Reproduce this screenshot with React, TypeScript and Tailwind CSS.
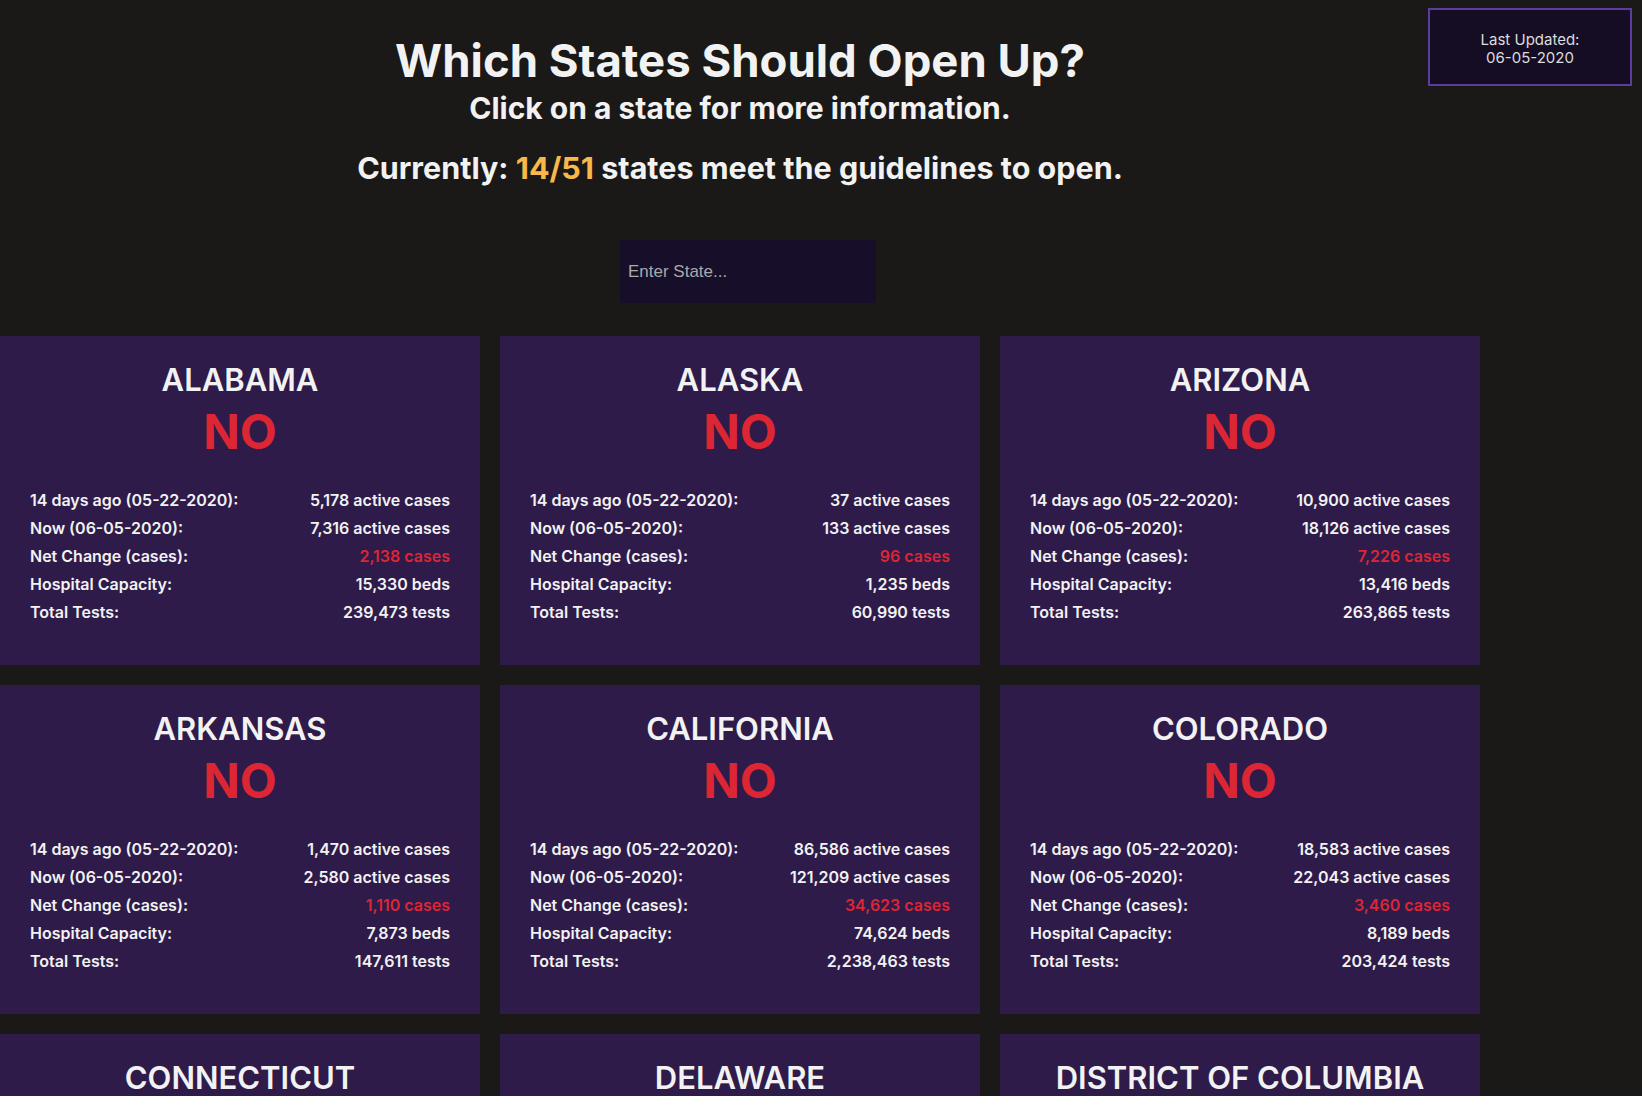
import { useState } from "react";

type StateInfo = {
  name: string;
  before: string;
  now: string;
  change: string;
  beds: string;
  tests: string;
};

const states: StateInfo[] = [
  { name: "ALABAMA", before: "5,178", now: "7,316", change: "2,138", beds: "15,330", tests: "239,473" },
  { name: "ALASKA", before: "37", now: "133", change: "96", beds: "1,235", tests: "60,990" },
  { name: "ARIZONA", before: "10,900", now: "18,126", change: "7,226", beds: "13,416", tests: "263,865" },
  { name: "ARKANSAS", before: "1,470", now: "2,580", change: "1,110", beds: "7,873", tests: "147,611" },
  { name: "CALIFORNIA", before: "86,586", now: "121,209", change: "34,623", beds: "74,624", tests: "2,238,463" },
  { name: "COLORADO", before: "18,583", now: "22,043", change: "3,460", beds: "8,189", tests: "203,424" },
  { name: "CONNECTICUT", before: "14,812", now: "9,973", change: "-4,839", beds: "8,798", tests: "269,512" },
  { name: "DELAWARE", before: "6,102", now: "5,743", change: "-359", beds: "2,205", tests: "69,004" },
  { name: "DISTRICT OF COLUMBIA", before: "6,871", now: "7,016", change: "145", beds: "4,368", tests: "49,314" },
];

export default function App() {
  const [query, setQuery] = useState("");

  const shown = states.filter((s) =>
    s.name.toLowerCase().includes(query.toLowerCase())
  );

  return (
    <div className="min-h-screen bg-[#1a1917] text-[#f2f2f2] font-['Inter',sans-serif] relative">
      {/* Last updated badge */}
      <div className="absolute top-2 right-[10px] w-[204px] h-[78px] border-2 border-[#5e3c9e] bg-[#150d24] flex flex-col items-center justify-center pt-1 text-[15px] leading-[18px] text-[#dcdcdc]">
        <span>Last Updated:</span>
        <span>06-05-2020</span>
      </div>

      <div className="w-[1480px]">
        {/* Header */}
        <div className="pt-[35px] flex flex-col items-center">
          <h1 className="text-[45.5px] leading-[52px] font-bold">
            Which States Should Open Up?
          </h1>
          <h2 className="mt-[4px] text-[30px] leading-[34px] font-bold">
            Click on a state for more information.
          </h2>
          <h2 className="mt-[25px] text-[30.5px] leading-[36px] font-bold">
            Currently: <span className="text-[#f9b84a]">14/51</span> states
            meet the guidelines to open.
          </h2>
        </div>

        {/* Search */}
        <div className="mt-[54px] flex justify-center pl-4">
          <input
            value={query}
            onChange={(e) => setQuery(e.target.value)}
            placeholder="Enter State..."
            className="w-[256px] h-[63px] bg-[#170f2a] px-2 text-[17px] text-[#dcdcdc] placeholder:text-[#a9a9a9] font-['Liberation_Sans',sans-serif] outline-none"
          />
        </div>

        {/* Cards */}
        <div className="mt-[33px] grid grid-cols-3 gap-5">
          {shown.map((s) => (
            <StateCard key={s.name} info={s} />
          ))}
        </div>
      </div>
    </div>
  );
}

function StateCard({ info }: { info: StateInfo }) {
  const rows = [
    { label: "14 days ago (05-22-2020):", value: `${info.before} active cases` },
    { label: "Now (06-05-2020):", value: `${info.now} active cases` },
    { label: "Net Change (cases):", value: `${info.change} cases`, red: true },
    { label: "Hospital Capacity:", value: `${info.beds} beds` },
    { label: "Total Tests:", value: `${info.tests} tests` },
  ];

  return (
    <div className="bg-[#2e1b4a] px-[30px] pt-[24px] pb-[39px] cursor-pointer">
      <h3 className="text-center text-[31px] leading-[40px] font-semibold">
        {info.name}
      </h3>
      <div className="mt-2 text-center text-[48px] leading-[48px] font-bold text-[#dc2634]">
        NO
      </div>
      <div className="mt-[30px]">
        {rows.map((r) => (
          <div
            key={r.label}
            className="flex justify-between text-[16px] leading-[28px] font-semibold"
          >
            <span>{r.label}</span>
            <span className={r.red ? "text-[#dc2634]" : ""}>{r.value}</span>
          </div>
        ))}
      </div>
    </div>
  );
}
